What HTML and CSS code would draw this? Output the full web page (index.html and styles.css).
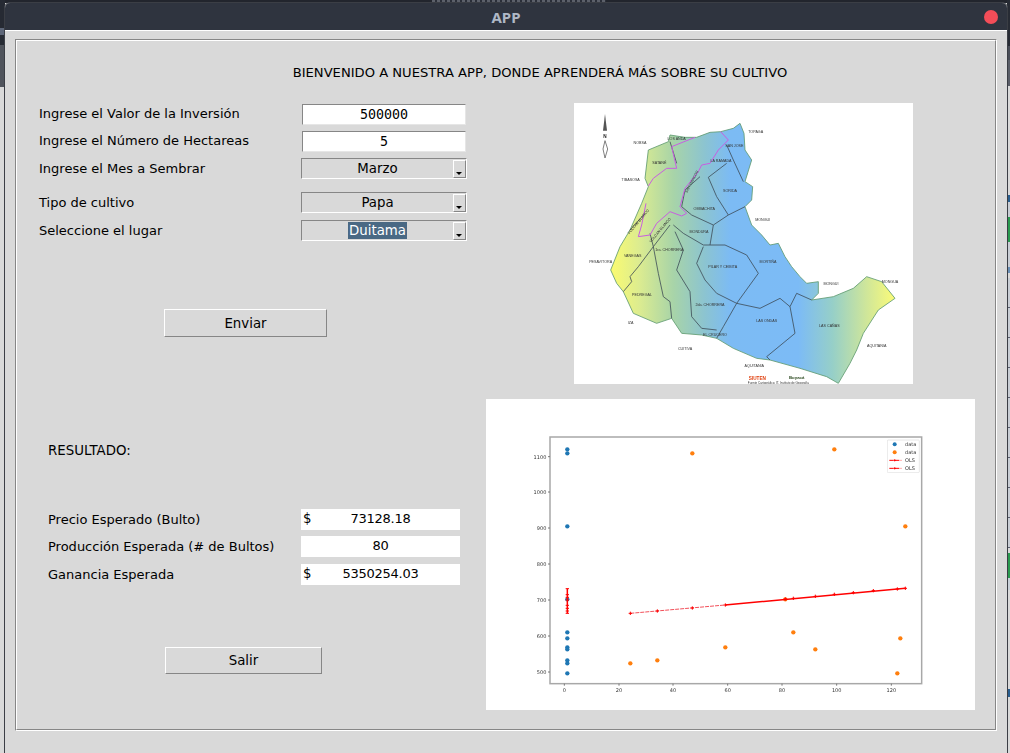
FILE: index.html
```html
<!DOCTYPE html>
<html lang="es">
<head>
<meta charset="utf-8">
<title>APP</title>
<link rel="stylesheet" href="styles.css">
</head>
<body>
<div class="backdrop-top"></div>
<div class="backdrop-left"></div>
<div class="backdrop-right"></div>
<main class="window">
  <header class="titlebar">
    <span></span>
    <span class="title">APP</span>
    <span class="close"></span>
  </header>
  <div class="client">
    <div class="groove">
      <div class="groove-inner">
        <h1 class="heading">BIENVENIDO A NUESTRA APP, DONDE APRENDERÁ MÁS SOBRE SU CULTIVO</h1>
        <div class="columns">
          <section class="left">
            <div class="form-group">
              <div class="row"><label class="label label-raised">Ingrese el Valor de la Inversión</label><div class="entry">500000</div></div>
              <div class="row"><label class="label label-raised">Ingrese el Número de Hectareas</label><div class="entry">5</div></div>
              <div class="row"><label class="label">Ingrese el Mes a Sembrar</label><div class="option"><span class="option-value"><span>Marzo</span></span><span class="arrow"></span></div></div>
            </div>
            <div class="form-group second">
              <div class="row"><label class="label">Tipo de cultivo</label><div class="option"><span class="option-value"><span>Papa</span></span><span class="arrow"></span></div></div>
              <div class="row"><label class="label">Seleccione el lugar</label><div class="option"><span class="option-value"><span class="selected">Duitama</span></span><span class="arrow"></span></div></div>
            </div>
            <button class="button send">Enviar</button>
            <div class="results">
              <div class="results-title">RESULTADO:</div>
              <div class="result-rows">
                <div class="row result-a"><span class="label result-label">Precio Esperado (Bulto)</span><div class="output"><span>$</span><span class="amount">73128.18</span><span></span></div></div>
                <div class="row result-a"><span class="label result-label">Producción Esperada (# de Bultos)</span><div class="output"><span></span><span class="amount">80</span><span></span></div></div>
                <div class="row result-c"><span class="label result-label">Ganancia Esperada</span><div class="output"><span>$</span><span class="amount">5350254.03</span><span></span></div></div>
              </div>
              <button class="button quit">Salir</button>
            </div>
          </section>
          <section class="right">
            <svg class="map" viewBox="12 9 1017 843" role="img" aria-label="Mapa de veredas">
              <defs>
                <linearGradient id="mapfill" gradientUnits="userSpaceOnUse" x1="122" y1="0" x2="975" y2="0">
                  <stop offset="0" stop-color="#fbfb70"/>
                  <stop offset="0.1" stop-color="#dcec90"/>
                  <stop offset="0.22" stop-color="#a8d4a8"/>
                  <stop offset="0.33" stop-color="#8cc4d0"/>
                  <stop offset="0.42" stop-color="#7cbbf4"/>
                  <stop offset="0.66" stop-color="#7cbbf6"/>
                  <stop offset="0.78" stop-color="#96cfc8"/>
                  <stop offset="0.9" stop-color="#cfe69a"/>
                  <stop offset="1" stop-color="#fbfb78"/>
                </linearGradient>
              </defs>
              <path class="map-shape" d="M452 95 490 85 510 70 522 100 525 150 545 180 525 245 548 260 545 300 525 320 545 375 575 405 600 435 625 430 645 470 665 500 690 530 710 550 745 545 745 580 725 600 790 590 850 565 890 530 935 545 975 595 925 630 880 700 860 750 840 790 805 850 770 830 690 805 600 780 560 775 490 745 440 715 395 705 335 700 305 655 260 670 190 640 160 575 140 550 122 510 150 440 180 390 215 310 235 260 225 235 235 150 295 125 300 105 345 112 380 112 420 97Z"/>
              <path class="map-line" d="M300 125 320 190M470 135 490 180 520 245M470 190 415 232 440 290 475 345 525 320M475 345 430 375 420 435M390 230 345 270 335 320 365 345 430 375M310 375 340 400 400 435 465 435 530 465 565 520 500 610 440 580 405 540 380 490 400 440M500 610 460 680 440 715M500 610 570 625 630 595 660 620 680 580 725 600M660 620 675 700 590 770 600 780M315 395 340 450 320 510 360 575 365 650 395 685 440 690M250 440 205 500 180 530 185 545 160 575M250 440 265 520 280 590 300 605 305 655M240 400 250 440 300 375M180 390 225 340"/>
              <path class="map-pink" d="M452 95 475 120 445 150 420 190 395 195 385 215 345 265 330 320 350 340 335 348 300 335 260 370 240 405 205 410 215 375 228 310M375 112 305 140 320 205 290 205 250 235 235 258"/>
              <path class="north" d="M105 42 111 92H99Z"/>
              <path class="north-open" d="M105 122 113 147 105 174 99 147Z"/>
              <g class="map-text">
                <text x="105" y="113" class="north-n">N</text>
                <text x="557" y="100">TOPAGA</text><text x="210" y="131">NOBSA</text><text x="182" y="243">TIBASOSA</text><text x="92" y="488">PESAVITORA</text>
                <text x="578" y="364">MONGUI</text><text x="783" y="554">MONGUI</text><text x="960" y="550">MONGUA</text><text x="920" y="742">AQUITANIA</text>
                <text x="345" y="750">CUITIVA</text><text x="553" y="802">AQUITANIA</text><text x="182" y="672">IZA</text>
                <text x="493" y="141">SAN JOSE</text><text x="453" y="187">LA RAMADA</text><text x="480" y="275">SORIDA</text><text x="403" y="330">OMBACHITA</text>
                <text x="387" y="399">MONDURA</text><text x="298" y="452">1ra. CHORRERA</text><text x="188" y="471">VANEGAS</text><text x="216" y="589">PEDREGAL</text>
                <text x="458" y="505">PILAR Y CEIBITA</text><text x="594" y="490">MORTIÑA</text><text x="420" y="619">2da. CHORRERA</text><text x="435" y="709">EL CRUCERO</text>
                <text x="590" y="667">LAS ONDAS</text><text x="778" y="680">LAS CAÑAS</text><text x="320" y="121">LOS ANDA</text><text x="268" y="193">SATANÉ</text>
                <text x="365" y="249" transform="rotate(-62 365 245)">SAN MARCOS</text><text x="205" y="369" transform="rotate(-50 205 365)">VOLCAN BLANCO</text><text x="270" y="394" transform="rotate(-50 270 390)">VOLCAN BLANCO</text>
                <text x="625" y="852" class="map-tiny">Fuente Cartográfica: IT. Instituto de Geografía</text>
                <text x="562" y="839" class="logo-red">SIUTEN</text><text x="680" y="838" class="logo-dark">Boyacá</text>
              </g>
            </svg>
            <svg class="chart" viewBox="3 -3 1467 933" role="img" aria-label="Gráfico de dispersión con regresión OLS">
              <rect class="axes" x="195" y="111" width="1115" height="740"/>
              <path class="ticks" d="M238 851v6M402 851v6M564 851v6M728 851v6M891 851v6M1055 851v6M1219 851v6M195 170h-6M195 276h-6M195 384h-6M195 492h-6M195 600h-6M195 708h-6M195 816h-6"/>
              <g class="tick-x">
                <text x="238" y="875">0</text><text x="402" y="875">20</text><text x="564" y="875">40</text><text x="728" y="875">60</text><text x="891" y="875">80</text><text x="1055" y="875">100</text><text x="1219" y="875">120</text>
              </g>
              <g class="tick-y">
                <text x="184" y="176">1100</text><text x="184" y="282">1000</text><text x="184" y="390">900</text><text x="184" y="498">800</text><text x="184" y="606">700</text><text x="184" y="714">600</text><text x="184" y="822">500</text>
              </g>
              <g class="dots-blue">
                <circle cx="247" cy="148" r="6.5"/><circle cx="247" cy="160" r="6.5"/><circle cx="247" cy="379" r="6.5"/><circle cx="247" cy="598" r="6.5"/><circle cx="247" cy="697" r="6.5"/><circle cx="247" cy="715" r="6.5"/><circle cx="247" cy="742" r="6.5"/><circle cx="247" cy="748" r="6.5"/><circle cx="247" cy="781" r="6.5"/><circle cx="247" cy="790" r="6.5"/><circle cx="247" cy="820" r="6.5"/>
              </g>
              <g class="dots-orange">
                <circle cx="622" cy="160" r="6.5"/><circle cx="1048" cy="148" r="6.5"/><circle cx="1261" cy="379" r="6.5"/><circle cx="901" cy="598" r="6.5"/><circle cx="925" cy="697" r="6.5"/><circle cx="1246" cy="715" r="6.5"/><circle cx="721" cy="742" r="6.5"/><circle cx="991" cy="748" r="6.5"/><circle cx="517" cy="781" r="6.5"/><circle cx="436" cy="790" r="6.5"/><circle cx="1237" cy="820" r="6.5"/>
              </g>
              <path class="ols-thin" d="M436 640 720 615"/>
              <path class="ols" d="M720 615 1261 565M247 566V640"/>
              <path class="ols-marks" d="M431 640h10M436 635v10M512 633h10M517 628v10M617 624h10M622 619v10M716 615h10M721 610v10M896 597h10M901 592v10M920 595h10M925 590v10M986 589h10M991 584v10M1043 583h10M1048 578v10M1100 578h10M1105 573v10M1160 572h10M1165 567v10M1232 567h10M1237 562v10M1256 565h10M1261 560v10M242 566h10M242 584h10M242 592h10M242 600h10M242 616h10M242 625h10M242 633h10M242 640h10"/>
              <rect class="legend" x="1207" y="120" width="96" height="98" rx="3"/>
              <circle class="legend-blue" cx="1229" cy="133" r="6"/>
              <circle class="legend-orange" cx="1229" cy="157" r="6"/>
              <path class="ols-dash" d="M1213 181h36M1213 205h36"/>
              <path class="ols-marks" d="M1226 181h6M1229 178v6M1226 205h6M1229 202v6"/>
              <g class="legend-text">
                <text x="1260" y="138">data</text><text x="1260" y="162">data</text><text x="1260" y="186">OLS</text><text x="1260" y="210">OLS</text>
              </g>
            </svg>
          </section>
        </div>
      </div>
    </div>
  </div>
</main>
</body>
</html>
```

FILE: styles.css
```css
* { box-sizing: border-box; }
html, body { height: 100%; }
body {
  margin: 0;
  overflow: hidden;
  background: #d9d9d9;
  font-family: "DejaVu Sans", sans-serif;
  font-size: 13.33px;
  color: #000;
}

/* Desktop visible around the window */
.backdrop-top {
  position: absolute;
  inset: 0 0 auto 0;
  height: 3px;
  background:
    repeating-linear-gradient(90deg, #5c606a 0 3px, #2a2e38 3px 5px) 432px 0 / 174px 2px no-repeat,
    #22252d;
}
.backdrop-left {
  position: absolute;
  left: 0;
  top: 0;
  width: 5px;
  height: 753px;
  background: linear-gradient(#262a33 0 28px, #5d6678 28px 35px, #272b34 35px 45px, #50545c 45px 87px, #d9d9d9 87px);
}
.backdrop-right {
  position: absolute;
  right: 0;
  top: 0;
  width: 3px;
  height: 753px;
  background:
    linear-gradient(#272b34 0 46px, #4a4e58 46px 60px, #5a5e68 60px 86px, #d9d9d9 86px 195px, #2a5f8f 195px 202px, #c8cdd4 202px 217px, #2b9a50 217px 242px, #c8cdd4 242px 267px, #6a8fb5 267px 273px, transparent 273px 553px, #2b9a50 553px 578px, #c8d0d8 578px 590px, #d9d9d9 590px 689px, #2a5f8f 689px 697px, #d9d9d9 697px),
    repeating-linear-gradient(#c8cdd4 0 29px, #5a6070 29px 30px) 0 278px / 3px 270px no-repeat,
    #d9d9d9;
}

.window {
  position: absolute;
  left: 4px;
  top: 2px;
  width: 1004px;
  height: 760px;
  display: flex;
  flex-direction: column;
  border: 1px solid #3b3e45;
  border-radius: 6px 6px 0 0;
  background: #d9d9d9;
}
.titlebar {
  flex: none;
  display: grid;
  grid-template-columns: 1fr auto 1fr;
  align-items: center;
  height: 27px;
  padding: 0 9px;
  background: #2f343f;
  border-radius: 5px 5px 0 0;
}
.title {
  font-family: "Noto Sans", sans-serif;
  font-weight: 700;
  font-size: 15px;
  color: #afb8c6;
}
.close {
  justify-self: end;
  width: 14px;
  height: 14px;
  border-radius: 50%;
  background: #f44d58;
}
.client {
  flex: 1;
  padding: 8px 10px 0;
  border-top: 1px solid #fff;
  background: #d9d9d9;
}
.groove {
  width: 982px;
  height: 692px;
  border: 1px solid;
  border-color: #868686 #fff #fff #868686;
}
.groove-inner {
  height: 100%;
  border: 1px solid;
  border-color: #fff #868686 #868686 #fff;
}
.heading {
  margin: 0;
  height: 62px;
  padding: 24px 0 0 68px;
  text-align: center;
  font-size: 13.12px;
  font-weight: 400;
  line-height: 16px;
}
.columns {
  display: grid;
  grid-template-columns: 469px 1fr;
}
.left { padding-left: 22px; }
.right {
  display: flex;
  flex-direction: column;
  align-items: flex-start;
}

.form-group {
  display: flex;
  flex-direction: column;
  gap: 6px;
  padding-top: 1px;
}
.form-group.second { gap: 7px; margin-top: 12px; }
.row {
  display: flex;
  align-items: center;
  height: 21px;
}
.label {
  width: 262px;
  flex: none;
  font-size: 13px;
  white-space: nowrap;
}
.label-raised { position: relative; top: -1px; }
.entry {
  width: 164px;
  height: 21px;
  margin-left: 1px;
  background: #fff;
  border: 1px solid;
  border-color: #868686 #e6e6e6 #e6e6e6 #868686;
  font-family: "DejaVu Sans Mono", monospace;
  font-size: 13.33px;
  line-height: 19px;
  text-align: center;
}
.option {
  display: flex;
  width: 166px;
  height: 21px;
  border: 1px solid;
  border-color: #868686 #fff #fff #868686;
}
.option-value {
  flex: 1;
  display: flex;
  align-items: center;
  justify-content: center;
}
.selected {
  padding: 1px 1px;
  background: #4a6984;
  color: #fff;
}
.arrow {
  position: relative;
  flex: none;
  width: 13px;
  margin-top: 1px;
  border: 1px solid;
  border-color: #fff #868686 #868686 #fff;
}
.arrow::after {
  content: "";
  position: absolute;
  left: 2px;
  bottom: 2px;
  border: solid transparent;
  border-width: 3px 3.5px 0;
  border-top-color: #000;
}
.button {
  display: block;
  padding: 0;
  border: 1px solid;
  border-color: #fff #868686 #868686 #fff;
  background: #d9d9d9;
  color: #000;
  font: inherit;
}
.send {
  width: 163px;
  height: 28px;
  margin: 68px 0 0 125px;
}
.results { padding-left: 9px; }
.results-title {
  margin-top: 106px;
  line-height: 16px;
}
.result-rows {
  display: flex;
  flex-direction: column;
  margin-top: 50px;
}
.result-label { width: 253px; }
.result-a { margin-bottom: 6px; }
.result-c { margin-top: 1px; }
.output {
  display: grid;
  grid-template-columns: 1fr auto 1fr;
  width: 159px;
  height: 21px;
  padding-left: 2px;
  background: #fff;
  line-height: 20px;
}
.amount {
  position: relative;
  left: -1px;
  font-size: 13px;
  letter-spacing: -0.25px;
}
.quit {
  width: 157px;
  height: 27px;
  margin: 62px 0 0 117px;
}

.map {
  display: block;
  width: 339px;
  height: 281px;
  margin-left: 88px;
  background: #fff;
}
.map-shape {
  fill: url(#mapfill);
  stroke: #5f9a70;
  stroke-width: 2.5;
  filter: blur(1px);
}
.map-line {
  fill: none;
  stroke: #3c4a55;
  stroke-width: 2.4;
  filter: blur(1.1px);
}
.map-pink {
  fill: none;
  stroke: #c85ee0;
  stroke-width: 3;
  filter: blur(1.1px);
}
.north { fill: #555; filter: blur(0.8px); }
.north-open { fill: #fff; stroke: #666; stroke-width: 2.5; filter: blur(0.8px); }
.map-text {
  font-family: "Liberation Sans", sans-serif;
  font-size: 11px;
  fill: #333;
  text-anchor: middle;
  filter: blur(0.55px);
}
.north-n { font-weight: 700; font-size: 14px; fill: #222; }
.map-tiny { font-size: 9px; }
.logo-red { font-weight: 700; font-size: 14px; fill: #e0400f; }
.logo-dark { font-weight: 700; font-size: 13px; fill: #2c4a20; }

.chart {
  display: block;
  width: 489px;
  height: 311px;
  margin-top: 15px;
  background: #fff;
}
.chart > *, .chart g { filter: blur(0.45px); }
.axes { fill: #fff; stroke: #a8a8a8; stroke-width: 4.5; }
.ticks { stroke: #777; stroke-width: 3; fill: none; }
.tick-x, .tick-y, .legend-text {
  font-family: "DejaVu Sans", sans-serif;
  font-size: 15px;
  fill: #333;
}
.tick-x { text-anchor: middle; }
.tick-y { text-anchor: end; }
.dots-blue, .legend-blue { fill: #1f77b4; }
.dots-orange, .legend-orange { fill: #ff7f0e; }
.ols { stroke: #f00; stroke-width: 4.5; fill: none; }
.ols-thin { stroke: #f2505a; stroke-width: 3; fill: none; stroke-dasharray: 12 3; }
.ols-dash { stroke: #f00; stroke-width: 3; fill: none; stroke-dasharray: 13 4; }
.ols-marks { stroke: #f00; stroke-width: 3; fill: none; }
.legend { fill: #fff; stroke: #ddd; stroke-width: 2; }
```
